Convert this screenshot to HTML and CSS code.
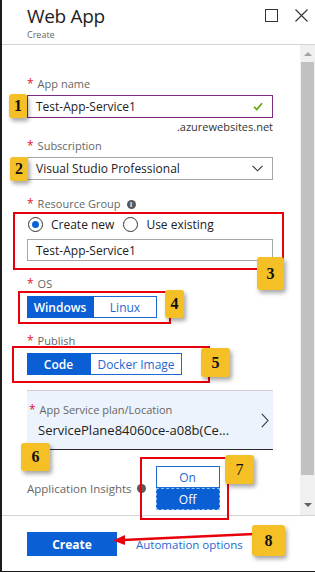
FILE: index.html
```html
<!DOCTYPE html>
<html lang="en">
<head>
    <meta charset="UTF-8">
    <title>Web App - Create</title>
    <link rel="stylesheet" href="styles.css">
</head>
<body>
    <div class="blade">
        <header class="blade-head">
            <div class="titles">
                <h1>Web App</h1>
                <div class="sub">Create</div>
            </div>
            <div class="head-icons">
                <svg width="13" height="13" viewBox="0 0 13 13"><rect x="0.5" y="0.5" width="12" height="12" fill="none" stroke="#333" stroke-width="1"/></svg>
                <svg width="13" height="13" viewBox="0 0 13 13"><path d="M0.5 0.5 L12.5 12.5 M12.5 0.5 L0.5 12.5" stroke="#333" stroke-width="1.1"/></svg>
            </div>
        </header>

        <div class="blade-body">
            <div class="form">
                <div class="label"><span class="req">*</span> App name</div>
                <div class="input valid">
                    <span>Test-App-Service1</span>
                    <svg width="10" height="9" viewBox="0 0 10 9"><path d="M1 4.8 L3.8 7.5 L9 1.2" fill="none" stroke="#5ca300" stroke-width="1.6"/></svg>
                </div>
                <div class="suffix">.azurewebsites.net</div>

                <div class="label gap-s"><span class="req">*</span> Subscription</div>
                <div class="input select">
                    <span>Visual Studio Professional</span>
                    <svg width="11" height="7" viewBox="0 0 11 7"><path d="M0.5 0.8 L5.5 5.8 L10.5 0.8" fill="none" stroke="#333" stroke-width="1.1"/></svg>
                </div>

                <div class="label gap-l"><span class="req">*</span> Resource Group <span class="info">i</span></div>
                <div class="radios">
                    <span class="radio on"></span><span class="radio-text">Create new</span>
                    <span class="radio"></span><span class="radio-text">Use existing</span>
                </div>
                <div class="input plain"><span>Test-App-Service1</span></div>

                <div class="label gap-m"><span class="req">*</span> OS</div>
                <div class="toggle">
                    <span class="seg active w-win">Windows</span>
                    <span class="seg w-linux">Linux</span>
                </div>

                <div class="label gap-m"><span class="req">*</span> Publish</div>
                <div class="toggle">
                    <span class="seg active w-code">Code</span>
                    <span class="seg w-docker">Docker Image</span>
                </div>

                <div class="plan">
                    <div class="plan-text">
                        <div class="label"><span class="req">*</span> App Service plan/Location</div>
                        <div class="plan-value">ServicePlane84060ce-a08b(Ce...</div>
                    </div>
                    <svg width="8" height="15" viewBox="0 0 8 15"><path d="M0.8 0.8 L7 7.5 L0.8 14.2" fill="none" stroke="#333" stroke-width="1.1"/></svg>
                </div>

                <div class="insights">
                    <span class="insights-label">Application Insights</span>
                    <span class="info">i</span>
                    <div class="onoff">
                        <span class="on-seg">On</span>
                        <span class="off-seg">Off</span>
                    </div>
                </div>
            </div>

            <div class="scrollbar">
                <span class="arrow up"></span>
                <span class="thumb"></span>
                <span class="arrow down"></span>
            </div>
        </div>

        <footer class="blade-foot">
            <button class="btn-create">Create</button>
            <a href="#" class="auto-link">Automation options</a>
        </footer>

        <!-- annotations over the screenshot -->
        <div class="notes">
            <div class="box box-3"></div>
            <div class="box box-4"></div>
            <div class="box box-5"></div>
            <div class="box box-7"></div>
            <svg class="arrow-8" width="150" height="20" viewBox="0 0 150 20">
                <path d="M145 6 L14 12" stroke="#e8000b" stroke-width="2.5"/>
                <path d="M4 12.5 L16 7 L16 17 Z" fill="#e8000b"/>
            </svg>
            <div class="badge b1">1</div>
            <div class="badge b2">2</div>
            <div class="badge b3">3</div>
            <div class="badge b4">4</div>
            <div class="badge b5">5</div>
            <div class="badge b6">6</div>
            <div class="badge b7">7</div>
            <div class="badge b8">8</div>
        </div>
    </div>
</body>
</html>
```

FILE: styles.css
```css
* { margin: 0; padding: 0; box-sizing: border-box; }
body { font-family: "Open Sans", "Noto Sans", sans-serif; color: #222; background: #fff; }

.blade { position: relative; width: 315px; height: 572px; border-left: 2px solid #1c1c1c; border-bottom: 1px solid #1c1c1c; display: flex; flex-direction: column; }

/* header */
.blade-head { height: 45px; flex: none; border-bottom: 1px solid #d4d4d4; display: flex; justify-content: space-between; padding: 5px 7px 0 25px; }
.blade-head h1 { font-size: 19px; line-height: 22px; font-weight: 400; color: #1e1e1e; letter-spacing: -0.3px; }
.blade-head .sub { font-size: 9px; line-height: 11px; margin-top: 2px; color: #666; }
.head-icons { display: flex; gap: 17px; padding-top: 4px; }

/* body */
.blade-body { height: 471px; flex: none; display: flex; border-bottom: 1px solid #d4d4d4; }
.form { flex: 1; padding: 32px 27px 0 25px; }
.label { font-size: 11px; line-height: 14px; height: 14px; color: #666; display: flex; align-items: center; gap: 4px; }
.req { color: #e8102a; font-size: 12px; }
.gap-s { margin-top: 5px; }
.gap-m { margin-top: 16px; }
.gap-l { margin-top: 17px; }

.input { height: 23px; margin-top: 4px; border: 1px solid #a6a6a6; display: flex; align-items: center; justify-content: space-between; padding: 0 9px 0 8px; font-size: 12px; color: #222; }
.input.valid { border-color: #7c2b85; }
.input.plain { height: 22px; margin-top: 7px; }
.suffix { margin-top: 2px; font-size: 11px; line-height: 14px; text-align: right; color: #333; }

.info { display: inline-flex; width: 9px; height: 9px; border-radius: 50%; background: #595959; color: #fff; font-size: 7px; font-weight: 700; align-items: center; justify-content: center; line-height: 1; margin-left: 2px; }

.radios { height: 16px; margin-top: 5px; display: flex; align-items: center; padding-left: 1px; font-size: 12px; color: #222; }
.radio { width: 15px; height: 15px; border: 1px solid #333; border-radius: 50%; display: flex; align-items: center; justify-content: center; margin-right: 8px; }
.radio.on::after { content: ""; width: 7px; height: 7px; border-radius: 50%; background: #0a63d6; }
.radio-text { margin-right: 9px; }

.toggle { margin-top: 5px; height: 22px; display: flex; }
.seg { display: flex; align-items: center; justify-content: center; font-size: 12px; color: #1f68d2; border: 1px solid #1f68d2; border-left: none; }
.seg.active { background: #0a5fd4; color: #fff; font-weight: 600; border-color: #0a5fd4; }
.w-win { width: 67px; }
.w-linux { width: 63px; }
.w-code { width: 64px; }
.w-docker { width: 91px; }

.plan { margin-top: 15px; height: 60px; background: #ecf3fc; border-top: 1px solid #d0d0d0; border-bottom: 1px solid #2a2a2a; display: flex; align-items: center; justify-content: space-between; padding: 0 4px 0 2px; }
.plan-text { display: flex; flex-direction: column; gap: 5px; margin-top: 1px; }
.plan-value { font-size: 13px; line-height: 16px; color: #222; padding-left: 9px; }

.insights { margin-top: 16px; height: 44px; display: flex; align-items: center; }
.insights-label { font-size: 11.5px; color: #666; }
.insights .info { margin-left: 5px; }
.onoff { margin-left: 10px; width: 64px; display: flex; flex-direction: column; }
.onoff span { height: 22px; display: flex; align-items: center; justify-content: center; font-size: 12px; }
.on-seg { border: 1px solid #1f68d2; color: #1f68d2; }
.off-seg { background: #0a5fd4; color: #fff; outline: 1px dashed #8cc4ff; outline-offset: -1px; }

/* scrollbar */
.scrollbar { width: 15px; flex: none; background: #f0f0f0; display: flex; flex-direction: column; align-items: center; }
.arrow { width: 0; height: 0; border-left: 4px solid transparent; border-right: 4px solid transparent; }
.arrow.up { border-bottom: 4px solid #a3a3a3; margin: 7px 0 6px; }
.arrow.down { border-top: 4px solid #606060; margin-top: 28px; }
.thumb { width: 13px; height: 413px; background: #c1c1c1; }

/* footer */
.blade-foot { flex: 1; display: flex; align-items: center; padding: 1px 0 0 25px; gap: 19px; }
.btn-create { width: 90px; height: 24px; border: none; background: #0a5fd4; color: #fff; font-family: inherit; font-size: 12px; font-weight: 700; }
.auto-link { color: #1f68d2; font-size: 11.5px; text-decoration: none; }

/* annotations */
.notes { position: absolute; left: -2px; top: 0; width: 315px; height: 574px; pointer-events: none; }
.box { position: absolute; border: 2px solid #e8000b; }
.box-3 { left: 13px; top: 212px; width: 271px; height: 58px; }
.box-4 { left: 18px; top: 291px; width: 153px; height: 33px; }
.box-5 { left: 12px; top: 346px; width: 198px; height: 37px; }
.box-7 { left: 140px; top: 457px; width: 89px; height: 63px; }
.arrow-8 { position: absolute; left: 109px; top: 528px; }

.badge { position: absolute; background: #f4c026; border-radius: 3px; box-shadow: 2px 3px 4px rgba(0, 0, 0, 0.35); display: flex; align-items: center; justify-content: center; font-family: "Liberation Serif", serif; font-weight: 700; font-size: 16px; color: #111; }
.b1 { left: 9px; top: 94px; width: 18px; height: 24px; }
.b2 { left: 10px; top: 157px; width: 18px; height: 24px; }
.b3 { left: 257px; top: 257px; width: 27px; height: 33px; }
.b4 { left: 165px; top: 290px; width: 19px; height: 28px; }
.b5 { left: 201px; top: 348px; width: 29px; height: 29px; }
.b6 { left: 21px; top: 443px; width: 29px; height: 28px; }
.b7 { left: 225px; top: 455px; width: 29px; height: 29px; font-weight: 400; }
.b8 { left: 252px; top: 525px; width: 33px; height: 31px; }
```
